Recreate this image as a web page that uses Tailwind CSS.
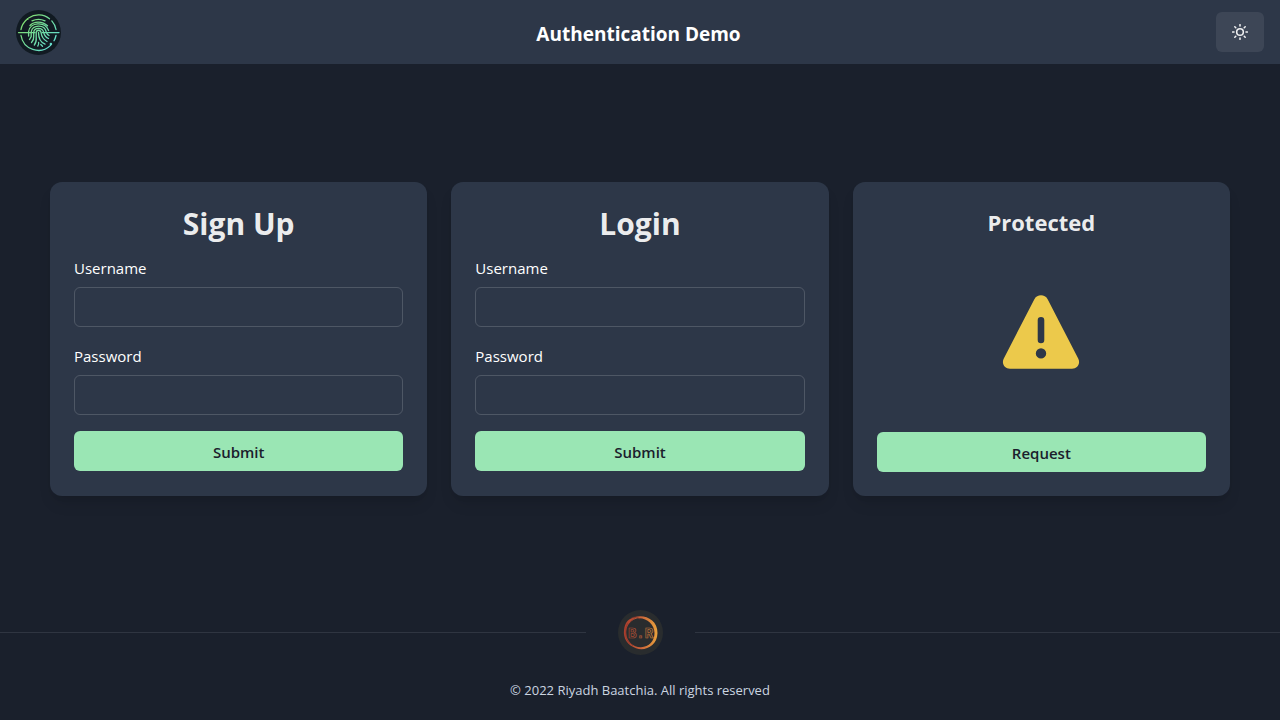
<!DOCTYPE html>
<html lang="en">
<head>
<meta charset="utf-8">
<meta name="viewport" content="width=device-width, initial-scale=1">
<title>Authentication Demo</title>
<script src="https://cdn.jsdelivr.net/npm/@tailwindcss/browser@4"></script>
</head>
<body class="flex min-h-screen flex-col bg-[#1a202c] font-['Open_Sans','Noto_Sans',sans-serif] text-[15px] leading-6 text-white/92">
<header class="flex h-16 items-center justify-between bg-[#2d3748] px-4">
  <a href="#" aria-label="Home">
    <svg class="size-[45px]" viewBox="0 0 45 45" fill="none" stroke-linecap="round">
      <defs><linearGradient id="mint" gradientUnits="userSpaceOnUse" x1="4" y1="6" x2="40" y2="40"><stop stop-color="#84dc62"/><stop offset="1" stop-color="#5fdcdc"/></linearGradient></defs>
      <circle cx="22.500" cy="22.500" r="22.500" fill="#111a22"/>
      <g stroke="url(#mint)" stroke-width="1.300">
        <path d="M2.500 22.600H19M26 22.600H43"/>
        <path d="M5 19.500A17.600 17.600 0 0 1 10.500 9.700M12.600 8A17.600 17.600 0 0 1 33.500 8.800M35.800 10.900A17.600 17.600 0 0 1 40 19.500M40 25.500A17.600 17.600 0 0 1 38 30.800M34.600 35.400A17.600 17.600 0 0 1 5 25.500"/>
        <path d="M16 10.800Q22.500 7.800 29 10.800M14 15.500C18 11 26.500 10.800 31.500 15.800"/>
        <path d="M12.600 26V21.500C14 12 29 11 32.600 20.500"/>
        <path d="M13.500 29.500L15.200 26.500V22C16 14.300 28.500 13.800 30.300 22Q31 24.500 33 25.500"/>
        <path d="M15.500 32.500Q18 30 17.700 26.500V22.500C18 17 26.800 17 27.700 22.500Q28.800 27 32.500 28.500"/>
        <path d="M18.300 35Q20.700 32 20.200 27V22.500C20.500 19.500 24.500 19.500 25 22.500Q26 29 31 31.500"/>
        <path d="M22.500 22.500Q22.500 31.500 29 34.200M21.800 36Q23 34.500 22.600 32.500M24.800 34.500L26.500 36.200"/>
      </g>
      <g fill="url(#mint)"><circle cx="11.600" cy="8.900" r="1"/><circle cx="34.900" cy="34" r="1.300"/></g>
    </svg>
  </a>
  <h1 class="pt-1 text-[19px] leading-7 font-bold text-white">Authentication Demo</h1>
  <button type="button" aria-label="Switch to light mode" class="flex h-10 w-12 items-center justify-center rounded-md bg-white/8">
    <svg class="size-4" viewBox="0 0 24 24" fill="none" stroke="currentColor" stroke-width="2.300" stroke-linecap="round"><circle cx="12" cy="12" r="5"/><path d="M12 1v2M12 21v2M4.220 4.220l1.420 1.420M18.360 18.360l1.420 1.420M1 12h2M21 12h2M4.220 19.780l1.420-1.420M18.360 5.640l1.420-1.420"/></svg>
  </button>
</header>

<main class="flex flex-1 items-center px-[50px] pt-1">
  <div class="grid w-full gap-6 md:grid-cols-3">
    <section class="flex min-h-[314px] flex-col rounded-xl bg-[#2d3748] p-6 shadow-lg">
      <h2 class="mb-[14px] text-center text-[30px] leading-[35px] font-bold">Sign Up</h2>
      <form class="flex flex-col gap-4">
        <div class="flex flex-col gap-1.5">
          <label for="signup-user" class="leading-[26px] text-white">Username</label>
          <input id="signup-user" type="text" class="h-10 w-full rounded-md border border-white/16 bg-transparent px-4">
        </div>
        <div class="flex flex-col gap-1.5">
          <label for="signup-pass" class="leading-[26px] text-white">Password</label>
          <input id="signup-pass" type="password" class="h-10 w-full rounded-md border border-white/16 bg-transparent px-4">
        </div>
        <button type="submit" class="h-10 rounded-md bg-[#9ae6b4] pt-0.5 font-semibold text-[#1a202c]">Submit</button>
      </form>
    </section>
    <section class="flex min-h-[314px] flex-col rounded-xl bg-[#2d3748] p-6 shadow-lg">
      <h2 class="mb-[14px] text-center text-[30px] leading-[35px] font-bold">Login</h2>
      <form class="flex flex-col gap-4">
        <div class="flex flex-col gap-1.5">
          <label for="login-user" class="leading-[26px] text-white">Username</label>
          <input id="login-user" type="text" class="h-10 w-full rounded-md border border-white/16 bg-transparent px-4">
        </div>
        <div class="flex flex-col gap-1.5">
          <label for="login-pass" class="leading-[26px] text-white">Password</label>
          <input id="login-pass" type="password" class="h-10 w-full rounded-md border border-white/16 bg-transparent px-4">
        </div>
        <button type="submit" class="h-10 rounded-md bg-[#9ae6b4] pt-0.5 font-semibold text-[#1a202c]">Submit</button>
      </form>
    </section>
    <section class="flex min-h-[314px] flex-col rounded-xl bg-[#2d3748] p-6 shadow-lg">
      <h2 class="text-center text-[22px] leading-8 font-bold">Protected</h2>
      <div class="flex flex-1 items-center justify-center">
        <svg class="size-24" viewBox="0 0 96 96" role="img" aria-label="Warning"><path fill="#ecc94b" fill-rule="evenodd" d="M41.500 12C44 7 52 7 54.500 12L85.200 71.500C87.800 76.500 84.500 81.700 79 81.700H17C11.500 81.700 8.200 76.500 10.800 71.500ZM44.700 33.200V53A3.300 3.300 0 0 0 51.300 53V33.200A3.300 3.300 0 0 0 44.700 33.200ZM48 61.200A5.200 5.200 0 1 0 48 71.600A5.200 5.200 0 1 0 48 61.200Z"/></svg>
      </div>
      <button type="button" class="h-10 rounded-md bg-[#9ae6b4] pt-0.5 font-semibold text-[#1a202c]">Request</button>
    </section>
  </div>
</main>

<footer class="flex flex-col gap-6 pb-5">
  <div class="flex items-center gap-8">
    <hr class="flex-1 border-[#2f3541]">
    <a href="#" aria-label="Riyadh Baatchia">
      <svg class="size-[45px]" viewBox="0 0 45 45" fill="none">
        <defs><linearGradient id="ember" gradientUnits="userSpaceOnUse" x1="6" y1="0" x2="39" y2="0"><stop stop-color="#a93c2c"/><stop offset=".5" stop-color="#c8623a"/><stop offset="1" stop-color="#e9a03c"/></linearGradient></defs>
        <circle cx="22.500" cy="22.500" r="22.500" fill="#292c2e"/>
        <path fill="url(#ember)" fill-rule="evenodd" d="M16 7.500C25 3.500 39.800 9 39.500 23C39.300 36 27 41.500 18 38.200C9 35 5 28 6 20C6.800 14 9 9 16 7.500ZM18 8.700C11 11 8.200 17 8.200 23C8.500 32 16 37.500 23 37.200C31 37 36.500 31 36.500 23C36.500 13.500 27 6.500 18 8.700Z"/>
        <path stroke="#8f3a2d" stroke-width=".7" d="M10 13C6 20 7 29 12 34M13 8.500Q18 5.500 22 9M12 12L18 7M9 30L15 36"/>
        <text x="22.500" y="27.500" text-anchor="middle" font-family="Liberation Mono, monospace" font-weight="700" font-size="14" stroke="url(#ember)" stroke-opacity=".85" stroke-width=".7">B.R</text>
      </svg>
    </a>
    <hr class="flex-1 border-[#2f3541]">
  </div>
  <p class="pt-px text-center text-[13px] leading-5 text-[#cbd5e0]">© 2022 Riyadh Baatchia. All rights reserved</p>
</footer>
</body>
</html>
